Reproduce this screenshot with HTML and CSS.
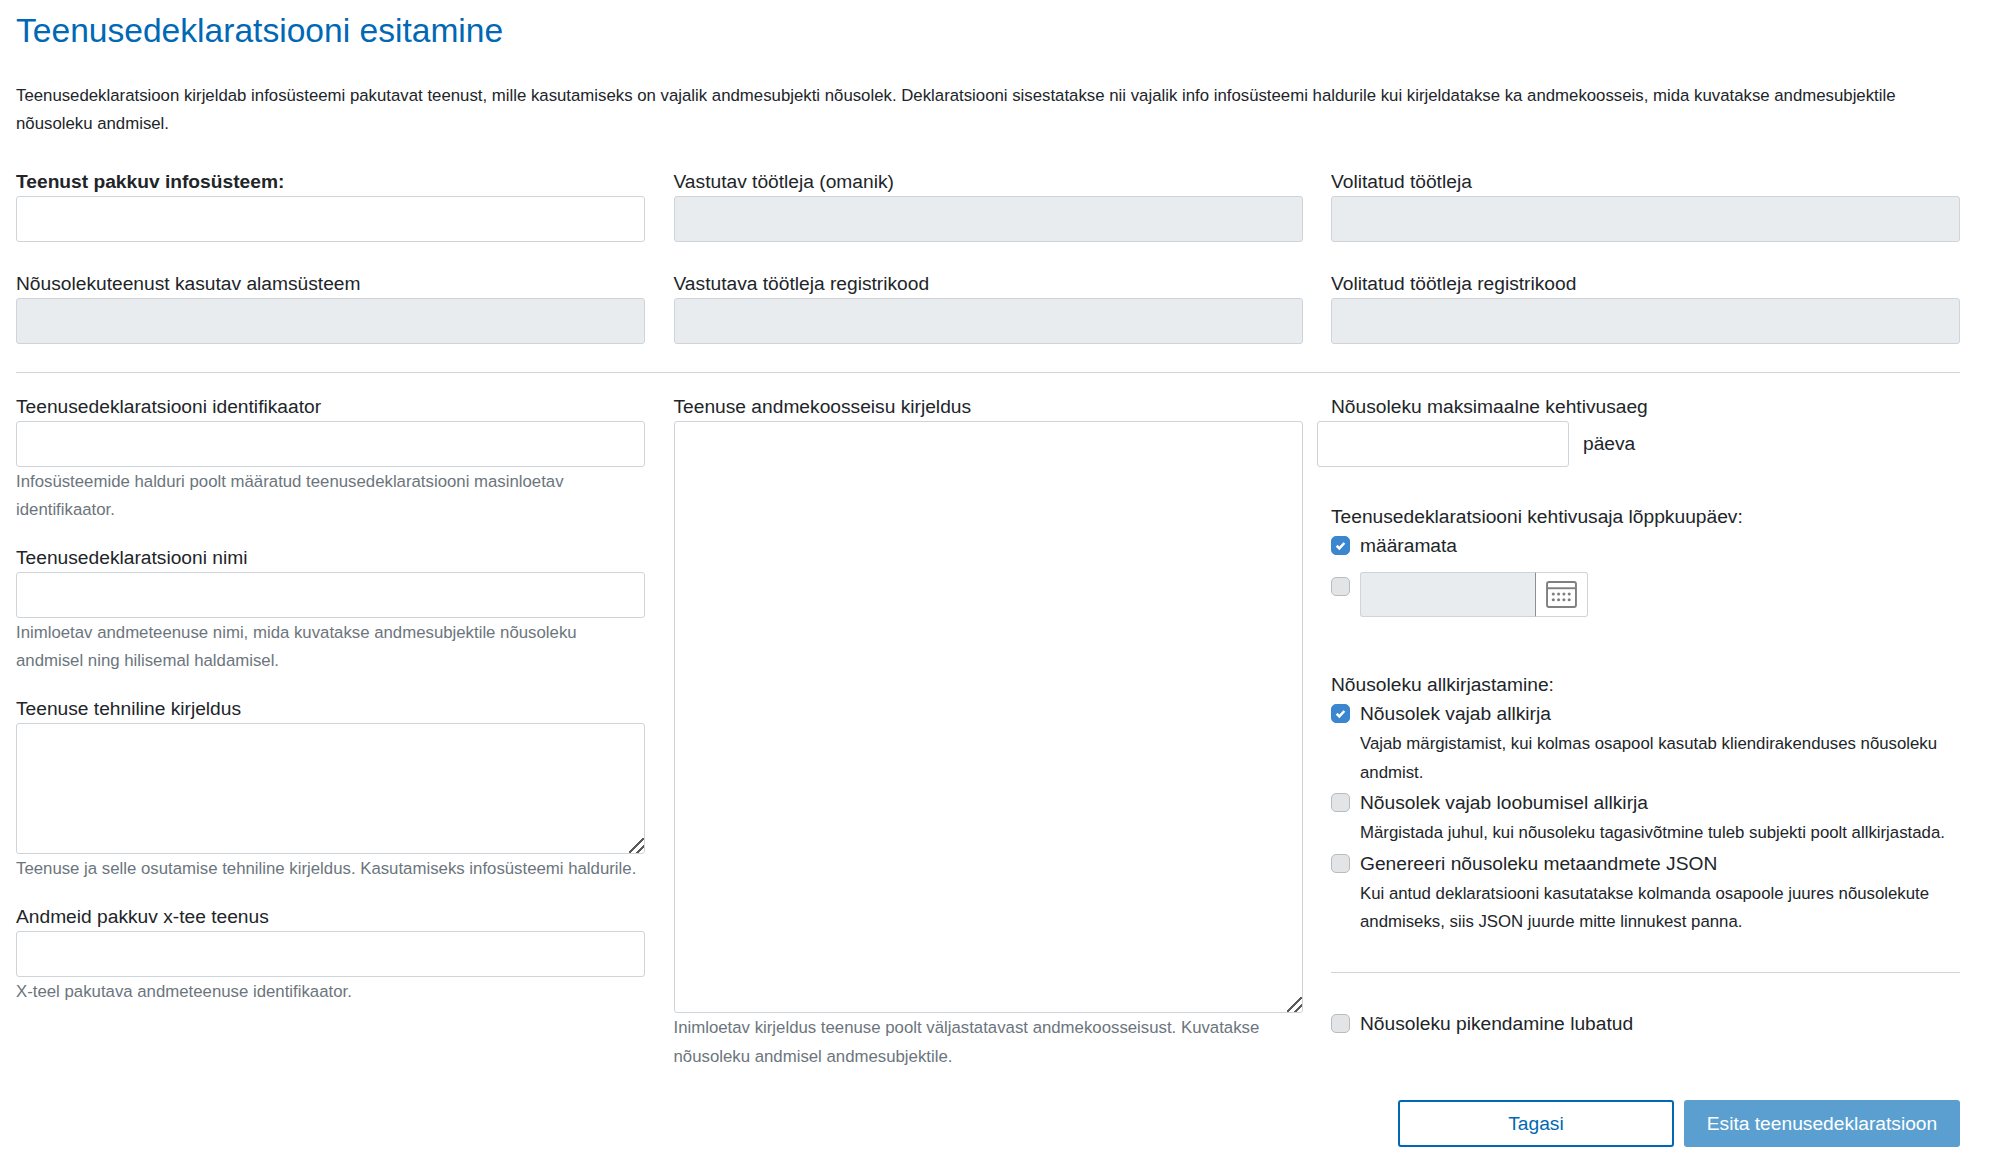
FILE: index.html
```html
<!DOCTYPE html>
<html lang="et">
<head>
<meta charset="utf-8">
<title>Teenusedeklaratsiooni esitamine</title>
<link rel="stylesheet" href="styles.css">
</head>
<body>
<main class="page">
  <h1 class="title">Teenusedeklaratsiooni esitamine</h1>
  <p class="intro">Teenusedeklaratsioon kirjeldab infosüsteemi pakutavat teenust, mille kasutamiseks on vajalik andmesubjekti nõusolek. Deklaratsiooni sisestatakse nii vajalik info infosüsteemi haldurile kui kirjeldatakse ka andmekoosseis, mida kuvatakse andmesubjektile nõusoleku andmisel.</p>

  <section class="grid top">
    <div class="group"><label class="label strong">Teenust pakkuv infosüsteem:</label><input class="field" type="text"></div>
    <div class="group"><label class="label">Vastutav töötleja (omanik)</label><input class="field" type="text" disabled></div>
    <div class="group"><label class="label">Volitatud töötleja</label><input class="field" type="text" disabled></div>
    <div class="group"><label class="label">Nõusolekuteenust kasutav alamsüsteem</label><input class="field" type="text" disabled></div>
    <div class="group"><label class="label">Vastutava töötleja registrikood</label><input class="field" type="text" disabled></div>
    <div class="group"><label class="label">Volitatud töötleja registrikood</label><input class="field" type="text" disabled></div>
  </section>

  <hr class="rule main-rule">

  <section class="grid">
    <div class="col">
      <div class="group stack"><label class="label">Teenusedeklaratsiooni identifikaator</label><input class="field" type="text"><p class="help">Infosüsteemide halduri poolt määratud teenusedeklaratsiooni masinloetav identifikaator.</p></div>
      <div class="group stack"><label class="label">Teenusedeklaratsiooni nimi</label><input class="field" type="text"><p class="help">Inimloetav andmeteenuse nimi, mida kuvatakse andmesubjektile nõusoleku andmisel ning hilisemal haldamisel.</p></div>
      <div class="group stack"><label class="label">Teenuse tehniline kirjeldus</label><textarea class="field area-short"></textarea><p class="help">Teenuse ja selle osutamise tehniline kirjeldus. Kasutamiseks infosüsteemi haldurile.</p></div>
      <div class="group stack"><label class="label">Andmeid pakkuv x-tee teenus</label><input class="field" type="text"><p class="help">X-teel pakutava andmeteenuse identifikaator.</p></div>
    </div>

    <div class="col">
      <div class="group"><label class="label">Teenuse andmekoosseisu kirjeldus</label><textarea class="field area-tall"></textarea><p class="help">Inimloetav kirjeldus teenuse poolt väljastatavast andmekoosseisust. Kuvatakse nõusoleku andmisel andmesubjektile.</p></div>
    </div>

    <div class="col">
      <label class="label">Nõusoleku maksimaalne kehtivusaeg</label>
      <div class="days"><input class="field days-input" type="text"><span class="days-unit">päeva</span></div>

      <label class="label end-date-label">Teenusedeklaratsiooni kehtivusaja lõppkuupäev:</label>
      <div class="check-row">
        <span class="box on"><svg viewBox="0 0 19 19" class="tick"><path d="M5.2 9.8l3 2.9 5.6-6"/></svg></span>
        <span class="check-text">määramata</span>
      </div>
      <div class="date-row">
        <span class="box date-box"></span>
        <div class="date">
          <input class="date-input" type="text" disabled>
          <span class="cal">
            <svg viewBox="0 0 32 28" class="cal-icon">
              <rect x="1" y="1" width="30" height="26" rx="2" class="cal-frame"/>
              <path d="M1 7.5h30" class="cal-frame"/>
              <g class="cal-dots">
                <circle cx="7.5" cy="13.5" r="1.6"/><circle cx="13" cy="13.5" r="1.6"/><circle cx="18.5" cy="13.5" r="1.6"/><circle cx="24" cy="13.5" r="1.6"/>
                <circle cx="7.5" cy="19.5" r="1.6"/><circle cx="13" cy="19.5" r="1.6"/><circle cx="18.5" cy="19.5" r="1.6"/><circle cx="24" cy="19.5" r="1.6"/>
              </g>
            </svg>
          </span>
        </div>
      </div>

      <label class="label sign-label">Nõusoleku allkirjastamine:</label>
      <div class="check-row">
        <span class="box on"><svg viewBox="0 0 19 19" class="tick"><path d="M5.2 9.8l3 2.9 5.6-6"/></svg></span>
        <span class="check-text">Nõusolek vajab allkirja</span>
      </div>
      <p class="note">Vajab märgistamist, kui kolmas osapool kasutab kliendirakenduses nõusoleku andmist.</p>
      <div class="check-row">
        <span class="box"></span>
        <span class="check-text">Nõusolek vajab loobumisel allkirja</span>
      </div>
      <p class="note">Märgistada juhul, kui nõusoleku tagasivõtmine tuleb subjekti poolt allkirjastada.</p>
      <div class="check-row">
        <span class="box"></span>
        <span class="check-text">Genereeri nõusoleku metaandmete JSON</span>
      </div>
      <p class="note">Kui antud deklaratsiooni kasutatakse kolmanda osapoole juures nõusolekute andmiseks, siis JSON juurde mitte linnukest panna.</p>

      <hr class="rule side-rule">

      <div class="check-row">
        <span class="box"></span>
        <span class="check-text">Nõusoleku pikendamine lubatud</span>
      </div>
    </div>
  </section>

  <div class="actions">
    <button class="btn btn-outline" type="button">Tagasi</button>
    <button class="btn btn-solid" type="button">Esita teenusedeklaratsioon</button>
  </div>
</main>
</body>
</html>
```
FILE: styles.css
```css
* { box-sizing: border-box; }
html, body { margin: 0; padding: 0; background: #fff; }
body {
  font-family: "Liberation Sans", Arial, sans-serif;
  font-size: 19.2px;
  color: #212529;
}
.page { width: 1989px; height: 1159px; padding: 0 29px 0 16px; overflow: hidden; }
.title {
  margin: 0;
  padding-top: 10px;
  height: 82px;
  font-size: 33.6px;
  line-height: 42px;
  font-weight: 400;
  color: #0068b4;
}
.intro { margin: 0 0 30px; font-size: 16.8px; line-height: 28px; }
.grid { display: grid; grid-template-columns: repeat(3, 629px); column-gap: 28.5px; }
.label { display: block; font-size: 19.2px; line-height: 28px; color: #212529; }
.strong { font-weight: 700; }
.top .group { height: 102px; }
.stack { margin-bottom: 19.5px; }
.field {
  display: block;
  width: 100%;
  height: 45.5px;
  padding: 6px 12px;
  font: inherit;
  background: #fff;
  border: 1px solid #ced4da;
  border-radius: 3px;
}
.field:disabled { background: #e9ecef; }
textarea.field { resize: vertical; }
textarea.field::-webkit-resizer {
  background: linear-gradient(135deg, transparent 0 46%, #5a5a5a 46% 56%, transparent 56% 72%, #5a5a5a 72% 82%, transparent 82%);
}
.area-short { height: 131px; }
.area-tall { height: 592px; }
.help { margin: 1px 0 0; font-size: 16.8px; line-height: 28.5px; color: #6c757d; }
.rule { margin: 0; border: 0; border-top: 1px solid #ced4da; }
.main-rule { margin: 0 0 20px; }
.days { display: flex; align-items: center; margin-left: -14px; gap: 14px; }
.days-input { width: 252px; }
.days-unit { line-height: 28px; }
.end-date-label { margin-top: 36px; }
.check-row { display: flex; align-items: flex-start; height: 28px; gap: 10px; }
.check-text { padding-top: 1px; line-height: 28px; font-size: 19.2px; }
.box {
  flex: none;
  width: 19px;
  height: 19px;
  margin-top: 5px;
  background: #e3e4e5;
  border: 1px solid #b8bcc0;
  border-radius: 5px;
}
.box.on { background: #3a87d0; border-color: #3a87d0; }
.tick { display: block; width: 17px; height: 17px; fill: none; stroke: #fff; stroke-width: 2.8; }
.date-row { display: flex; align-items: flex-start; gap: 10px; margin-top: 13px; }
.date-box { margin-top: 5px; }
.date { display: flex; width: 228px; height: 45.5px; }
.date-input {
  width: 175px;
  height: 100%;
  background: #e9ecef;
  border: 1px solid #ced4da;
  border-right: 0;
  border-radius: 3px 0 0 3px;
}
.cal {
  display: flex;
  align-items: center;
  justify-content: center;
  width: 53px;
  background: #fff;
  border: 1px solid #ced4da;
  border-left-color: #8a8f94;
  border-radius: 0 3px 3px 0;
}
.cal-icon { width: 31px; height: 27px; }
.cal-frame { fill: none; stroke: #808080; stroke-width: 2; }
.cal-dots { fill: #808080; }
.sign-label { margin-top: 54px; }
.note { margin: 3px 0 1px 29px; font-size: 16.8px; line-height: 28.5px; color: #212529; }
.side-rule { margin: 35px 0 36px; }
.actions { display: flex; justify-content: flex-end; gap: 10px; margin-top: 29px; }
.btn {
  height: 47px;
  font-family: inherit;
  font-size: 19.2px;
  border-radius: 3px;
}
.btn-outline { width: 276px; background: #fff; color: #0068b4; border: 2px solid #0068b4; }
.btn-solid { width: 276px; background: #5a9fd0; color: #fff; border: 0; }
```
